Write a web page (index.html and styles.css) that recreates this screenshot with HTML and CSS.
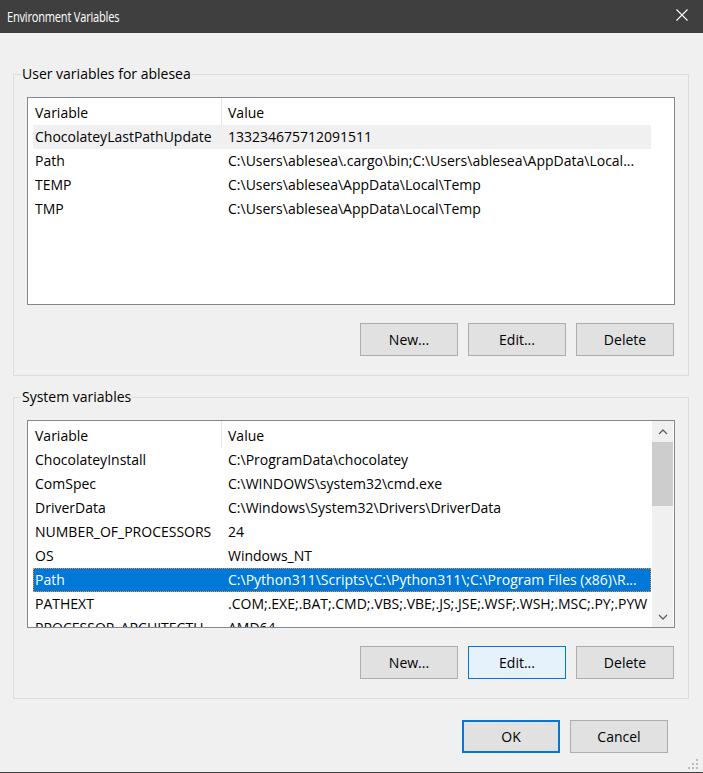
FILE: index.html
```html
<!DOCTYPE html>
<html>
<head>
<meta charset="utf-8">
<title>Environment Variables</title>
<link rel="stylesheet" href="styles.css">
</head>
<body>
<div class="window">
  <div class="titlebar">
    <span class="title">Environment Variables</span>
    <svg class="close" width="12" height="12" viewBox="0 0 12 12"><path d="M0.5 0.5 L11.5 11.5 M11.5 0.5 L0.5 11.5" stroke="#ffffff" stroke-width="1.1" fill="none"/></svg>
  </div>
  <div class="content">
    <div class="group">
      <span class="legend">User variables for ablesea</span>
      <div class="list">
        <div class="cols">
          <div class="hdr"><div class="h1">Variable</div><div class="h2">Value</div></div>
          <div class="row inactive"><div class="c1">ChocolateyLastPathUpdate</div><div class="c2">133234675712091511</div></div>
          <div class="row"><div class="c1">Path</div><div class="c2">C:\Users\ablesea\.cargo\bin;C:\Users\ablesea\AppData\Local...</div></div>
          <div class="row"><div class="c1">TEMP</div><div class="c2">C:\Users\ablesea\AppData\Local\Temp</div></div>
          <div class="row"><div class="c1">TMP</div><div class="c2">C:\Users\ablesea\AppData\Local\Temp</div></div>
        </div>
      </div>
      <div class="buttons">
        <button class="btn">New...</button>
        <button class="btn">Edit...</button>
        <button class="btn">Delete</button>
      </div>
    </div>

    <div class="group group2">
      <span class="legend">System variables</span>
      <div class="list">
        <div class="cols">
          <div class="hdr"><div class="h1">Variable</div><div class="h2">Value</div></div>
          <div class="row"><div class="c1">ChocolateyInstall</div><div class="c2">C:\ProgramData\chocolatey</div></div>
          <div class="row"><div class="c1">ComSpec</div><div class="c2">C:\WINDOWS\system32\cmd.exe</div></div>
          <div class="row"><div class="c1">DriverData</div><div class="c2">C:\Windows\System32\Drivers\DriverData</div></div>
          <div class="row"><div class="c1">NUMBER_OF_PROCESSORS</div><div class="c2">24</div></div>
          <div class="row"><div class="c1">OS</div><div class="c2">Windows_NT</div></div>
          <div class="row selected"><div class="c1">Path</div><div class="c2">C:\Python311\Scripts\;C:\Python311\;C:\Program Files (x86)\R...</div></div>
          <div class="row"><div class="c1">PATHEXT</div><div class="c2">.COM;.EXE;.BAT;.CMD;.VBS;.VBE;.JS;.JSE;.WSF;.WSH;.MSC;.PY;.PYW</div></div>
          <div class="row"><div class="c1">PROCESSOR_ARCHITECTU...</div><div class="c2">AMD64</div></div>
        </div>
        <div class="scrollbar">
          <div class="sb-btn"><svg width="10" height="6" viewBox="0 0 10 6"><path d="M1 5 L5 1 L9 5" stroke="#606060" stroke-width="1.3" fill="none"/></svg></div>
          <div class="sb-thumb"></div>
          <div class="sb-track"></div>
          <div class="sb-btn"><svg width="10" height="6" viewBox="0 0 10 6"><path d="M1 1 L5 5 L9 1" stroke="#606060" stroke-width="1.3" fill="none"/></svg></div>
        </div>
      </div>
      <div class="buttons">
        <button class="btn">New...</button>
        <button class="btn hot">Edit...</button>
        <button class="btn">Delete</button>
      </div>
    </div>

    <div class="footer">
      <button class="btn default">OK</button>
      <button class="btn">Cancel</button>
    </div>
  </div>
  <svg class="grip" width="12" height="12" viewBox="0 0 12 12">
    <rect x="9" y="1" width="2" height="2" fill="#bcbcbc"/>
    <rect x="5" y="5" width="2" height="2" fill="#bcbcbc"/>
    <rect x="9" y="5" width="2" height="2" fill="#bcbcbc"/>
    <rect x="1" y="9" width="2" height="2" fill="#bcbcbc"/>
    <rect x="5" y="9" width="2" height="2" fill="#bcbcbc"/>
    <rect x="9" y="9" width="2" height="2" fill="#bcbcbc"/>
  </svg>
</div>
</body>
</html>
```

FILE: styles.css
```css
html, body {
  margin: 0;
  padding: 0;
  width: 703px;
  height: 773px;
  overflow: hidden;
  background: #f0f0f0;
}

.window {
  position: relative;
  box-sizing: border-box;
  width: 703px;
  height: 773px;
  border-bottom: 1px solid #3f3f3f;
  background: #f0f0f0;
  font-family: "Open Sans", "Noto Sans", sans-serif;
  font-size: 14px;
  color: #000;
}

.titlebar {
  height: 33px;
  background: #3f3f3f;
  display: flex;
  justify-content: space-between;
  align-items: flex-start;
}

.title {
  display: inline-block;
  color: #ffffff;
  font-size: 15px;
  line-height: 33px;
  margin-left: 7px;
  letter-spacing: -0.3px;
  white-space: nowrap;
  transform: scaleX(0.74);
  transform-origin: left center;
}

.close {
  margin-top: 9px;
  margin-right: 15px;
}

.content {
  padding: 41px 0 0 13px;
}

.group {
  position: relative;
  box-sizing: border-box;
  width: 676px;
  height: 302px;
  border: 1px solid #dcdcdc;
  padding: 22px 13px 0 13px;
}

.group2 {
  margin-top: 21px;
}

.legend {
  position: absolute;
  top: -11px;
  left: 7px;
  padding: 0 1px;
  line-height: 19px;
  background: #f0f0f0;
  white-space: nowrap;
}

.list {
  box-sizing: border-box;
  height: 208px;
  border: 1px solid #828790;
  background: #ffffff;
  display: flex;
  overflow: hidden;
}

.cols {
  flex: 1;
  padding-left: 5px;
  overflow: hidden;
}

.hdr {
  display: flex;
  width: 618px;
  height: 27px;
  box-sizing: border-box;
  padding-top: 2px;
  line-height: 25px;
}

.h1 {
  box-sizing: border-box;
  width: 189px;
  padding-left: 2px;
  border-right: 1px solid #e5e5e5;
  margin-top: -2px;
  padding-top: 2px;
}

.h2 {
  flex: 1;
  padding-left: 6px;
}

.row {
  display: flex;
  width: 618px;
  height: 24px;
  line-height: 24px;
  white-space: nowrap;
}

.c1 {
  box-sizing: border-box;
  width: 189px;
  padding-left: 2px;
  overflow: hidden;
}

.c2 {
  flex: 1;
  padding-left: 6px;
  overflow: hidden;
}

.row.inactive {
  background: #f0f0f0;
}

.row.selected {
  background: #0078d7;
  color: #ffffff;
  outline: 1px dotted #ff8728;
  outline-offset: -1px;
}

.scrollbar {
  width: 21px;
  margin-right: 1px;
  background: #f0f0f0;
  display: flex;
  flex-direction: column;
}

.sb-btn {
  height: 21px;
  display: flex;
  align-items: center;
  justify-content: center;
}

.sb-thumb {
  height: 64px;
  background: #cdcdcd;
}

.sb-track {
  flex: 1;
}

.buttons {
  display: flex;
  justify-content: flex-end;
  gap: 10px;
  margin-top: 18px;
  padding-right: 1px;
}

.btn {
  box-sizing: border-box;
  width: 98px;
  height: 33px;
  padding: 0;
  margin: 0;
  background: #e1e1e1;
  border: 1px solid #adadad;
  font-family: "Open Sans", "Noto Sans", sans-serif;
  font-size: 14px;
  color: #000;
}

.btn.hot {
  background: #e5f1fb;
  border-color: #0078d7;
}

.btn.default {
  border: 2px solid #0078d7;
}

.footer {
  display: flex;
  justify-content: flex-end;
  gap: 10px;
  margin-top: 21px;
  padding-right: 35px;
}

.grip {
  position: absolute;
  right: 4px;
  bottom: 2px;
}
```
